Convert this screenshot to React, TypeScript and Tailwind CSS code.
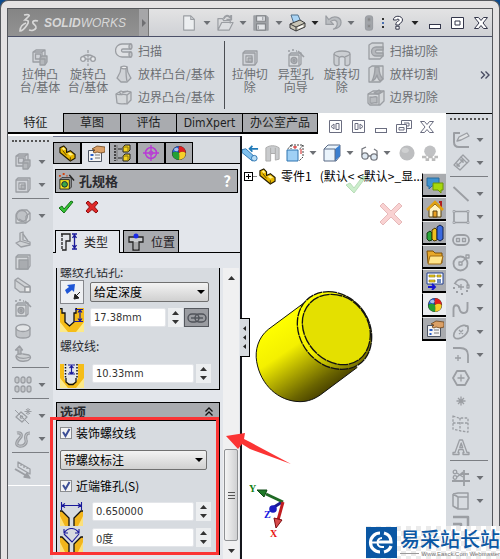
import React, { useState } from 'react';
import clsx from 'clsx';

type IconProps = { children: React.ReactNode; className?: string; box?: string };

// Disabled toolbar glyphs share one grey outline style
function Gray({ children, className = 'size-[18px]', box = '0 0 18 18' }: IconProps) {
  return (
    <svg viewBox={box} className={clsx('shrink-0', className)} fill="none" stroke="#9b9ea3" strokeWidth="1.3" strokeLinejoin="round">
      {children}
    </svg>
  );
}

function Svg({ children, className = 'size-[18px]', box = '0 0 18 18' }: IconProps) {
  return (
    <svg viewBox={box} className={clsx('shrink-0', className)} fill="none">
      {children}
    </svg>
  );
}

function Caret({ dark = false }: { dark?: boolean }) {
  return (
    <svg viewBox="0 0 8 4" className="h-1 w-2 shrink-0" fill={dark ? '#222' : '#6d7075'}>
      <path d="M0.5 0h7L4 4z" />
    </svg>
  );
}

const icons = {
  boss: (
    <Gray>
      <path d="M2 3l3-2h9v9l-3 3H2zM2 3h9v10M11 3l3-2" fill="#d0d3d8" />
      <path d="M4.500 5h5v5h-5z" />
      <path d="M9 9l2-2h5v6l-2 3H9z" fill="#b4b7bb" />
      <path d="M9 10h5v6" />
    </Gray>
  ),
  cut: (
    <Gray>
      <path d="M2 4l2-2h12v11l-2 3H2z" fill="#d0d3d8" />
      <path d="M2 4h12v12" />
      <path d="M5 7h6v6H5z" fill="#eceef0" />
      <path d="M7 9h4v4H7z" fill="#b4b7bb" />
    </Gray>
  ),
  revolve: (
    <Gray>
      <path d="M9 1v16" strokeDasharray="3 1.500" />
      <path d="M1.500 11c0-3 4-5 7.500-5s7.500 2 7.500 5" />
      <circle cx="4" cy="10" r="2.300" fill="#e8eaec" />
      <circle cx="14" cy="10" r="2.300" fill="#e8eaec" />
      <path d="M6 10h6" />
    </Gray>
  ),
  sweep: (
    <Gray>
      <path d="M16 2H7a6 6 0 0 0 0 13h9v-5H8a1.500 1.500 0 0 1 0-3h8z" fill="#dfe1e4" />
      <ellipse cx="15.500" cy="4.500" rx="1.500" ry="2.500" fill="#c2c5c9" />
      <ellipse cx="15.500" cy="12.500" rx="1.500" ry="2.500" fill="#c2c5c9" />
    </Gray>
  ),
  loft: (
    <Gray>
      <path d="M6 2h6c0 6 2 8 4 11l-4 4H6l-4-4c2-3 4-5 4-11z" fill="#cfd2d6" />
      <ellipse cx="9" cy="2.500" rx="3" ry="1.300" fill="#eee" />
      <path d="M11 4c0 5 0 8 1 12" />
    </Gray>
  ),
  boundary: (
    <Gray>
      <path d="M1 6l5-3c3 2 6-1 10 1v8l-4 4c-3-1-6 1-10-1z" fill="#d4d7da" />
      <path d="M1 6c4 2 7-1 11 1v9M12 7l4-3M4 4l3 3M7 5l6-2" />
    </Gray>
  ),
  hole: (
    <Gray>
      <path d="M2 6h10v11H2z" fill="#d6d9dc" />
      <path d="M2 6l2-2h10v11l-2 2" />
      <circle cx="7" cy="11.500" r="3" fill="#b4b7bb" />
      <circle cx="7" cy="11.500" r="1" />
      <path d="M1 2h2M5 1h2M9 2h1M11 2l6 6" strokeWidth="1.600" />
    </Gray>
  ),
  revCut: (
    <Gray>
      <path d="M1 5c0-4 16-4 16 0v9c0 3-4 3-5 2V9c-1-2-5-2-6 0v7c-2 1-5 1-5-2z" fill="#cbced2" />
      <path d="M1 5c1 2 4 2 5 3M17 5c-1 2-4 2-5 3" />
    </Gray>
  ),
  sweepCut: (
    <Gray>
      <path d="M2 3l3-2h11v13l-3 3H2z" fill="#d3d6d9" />
      <path d="M16 5H9a4 4 0 0 0 0 9h7v-3h-6a1 1 0 0 1 0-3h6z" fill="#b5b8bc" />
    </Gray>
  ),
  loftCut: (
    <Gray>
      <path d="M2 3l3-2h11v13l-3 3H2z" fill="#d3d6d9" />
      <path d="M8 2h4c0 5 1 9 4 12l-3 2c-3-3-2-4-3-6-1 3-2 5-5 6 2-4 3-9 3-14z" fill="#b0b3b7" />
    </Gray>
  ),
  boundaryCut: (
    <Gray>
      <path d="M1 6l5-3h11v10l-4 4H3l-2-2z" fill="#d4d7da" />
      <path d="M1 6h11l5-3M12 6v11" />
      <path d="M3 9c3 1 5-1 7 0v6c-2-1-4 1-7 0z" fill="#b9bcc0" />
      <path d="M7 5l5-3 2 2-3 2z" fill="#a9acb0" />
    </Gray>
  ),
  fillet: (
    <Gray>
      <path d="M2 16V9c0-3 2-6 6-6h5l3 3v7l-4 3z" fill="#d5d8db" />
      <circle cx="8" cy="9" r="5.500" fill="#bfc2c6" />
      <path d="M5 12l7 4M12 9v7M12 9l4-3" />
    </Gray>
  ),
  rib: (
    <Gray>
      <path d="M2 13l4-2V3l3-1v8l7 2v3l-9 2z" fill="#cfd2d5" />
      <path d="M9 4l5 7M6 11l10 3" />
    </Gray>
  ),
  shell: (
    <Gray>
      <path d="M2 4l2-2h12v11l-2 3H2z" fill="#d5d8db" />
      <path d="M2 4h12v12" />
      <path d="M5 7h9v9H5z" fill="#a9acb0" />
    </Gray>
  ),
  draft: (
    <Gray>
      <path d="M1 4l3-2 12 8v6H6L1 12z" fill="#d0d3d6" />
      <path d="M1 4l10 7v5M11 11h5" />
      <path d="M11 11h5v5h-5z" fill="#eee" />
    </Gray>
  ),
  cylinder: (
    <Gray>
      <path d="M2 6v7c0 4 14 4 14 0V6z" fill="#c0c3c7" />
      <ellipse cx="9" cy="6" rx="7" ry="3.500" fill="#e3e5e7" />
    </Gray>
  ),
  wrap: (
    <Gray>
      <path d="M2 11c1-2 4-3 7-2l6 1c3 2 1 6-4 6-5 1-9-1-9-5z" fill="#cccfd2" />
      <path d="M2 11c4 3 9 3 14 1" />
      <path d="M4 9V5H1.500L5.500 1l3 4H7v4z" fill="#b4b7bb" />
    </Gray>
  ),
  pattern: (
    <Gray>
      {[2, 8, 14].map((x) => (
        <g key={x} fill="#c4c7ca">
          <rect x={x - 1} y="1" width="4" height="6" rx="2" />
          <rect x={x - 1} y="10" width="4" height="6" rx="2" />
        </g>
      ))}
    </Gray>
  ),
  refGeo: (
    <Gray>
      <path d="M2 10l5-5 6 5-5 5z" />
      <circle cx="7.500" cy="10" r="1.200" />
      <path d="M1 3l14 14M14 1v7M10.500 4.500h7M12 2l4 5M16 2l-4 5" strokeWidth="1" />
    </Gray>
  ),
  curve: (
    <Gray>
      <path d="M3 3c5-1 5 3 3 5-3 3-5 7-1 8 5 1 8-3 7-6-1-4 0-7 4-7" strokeWidth="3.200" />
      <path d="M3 3c5-1 5 3 3 5-3 3-5 7-1 8 5 1 8-3 7-6-1-4 0-7 4-7" stroke="#c6c9cd" strokeWidth="1" />
    </Gray>
  ),
  instant: (
    <Gray>
      <path d="M4 1l12 7v5L4 6zM7 3v2M10 5v2M13 6v2" />
      <path d="M1 8l12 7" strokeWidth="2" />
      <path d="M16 17l-6-1 3-4z" fill="#9b9ea3" />
    </Gray>
  ),
  sketch: (
    <Gray>
      <path d="M8 2H2v9c0 3 2 5 5 5h10" strokeWidth="2" />
      <path d="M5 10l2-4 8-4 2 3-8 4z" fill="#e0e2e4" />
    </Gray>
  ),
  dimension: (
    <Gray>
      <path d="M2 11l7-8 6 6-7 7z" />
      <path d="M5 12l6-6M5 12v-3M5 12h3M11 6H8M11 6v3M9 3l2-2 6 6-2 2" />
    </Gray>
  ),
  line: <Gray><path d="M1.500 2l15 14" strokeWidth="1.800" /></Gray>,
  rect: (
    <Gray>
      <path d="M2 3.500h14v11H2z" strokeWidth="1.700" />
      <path d="M1 2.500h2v2H1zM15 2.500h2v2h-2zM1 13.500h2v2H1zM15 13.500h2v2h-2z" fill="#d7dadf" strokeWidth=".8" />
    </Gray>
  ),
  slot: (
    <Gray>
      <rect x="1" y="4" width="16" height="10" rx="5" strokeWidth="1.800" />
      <path d="M4.500 7.500h3v3h-3zM10.500 7.500h3v3h-3z" />
    </Gray>
  ),
  circle: (
    <Gray>
      <circle cx="8.500" cy="9.500" r="7" strokeWidth="1.800" />
      <path d="M7 8h3v3H7zM10 8l6-6" />
      <path d="M14 1h3v3h-3z" fill="#d7dadf" />
    </Gray>
  ),
  arc: (
    <Gray>
      <path d="M3 7c2-7 13-6 13 2" strokeWidth="1.700" />
      <path d="M2 6l7 4M9 7v6M6 10h6M15 8h2v3h-2z" />
      <path d="M1 11h2M4 15h2M9 17h2M14 14h2" strokeWidth="2" />
    </Gray>
  ),
  spline: <Gray><path d="M1.500 17V9c0-5 5-5 6 0s8 6 8-1V2" strokeWidth="1.900" /></Gray>,
  ellipse: (
    <Gray>
      <ellipse cx="9" cy="9" rx="8.500" ry="5" transform="rotate(-40 9 9)" strokeWidth="1.700" />
      <path d="M7 7l4 4M11 7l-4 4M13 3h3v3" />
    </Gray>
  ),
  corner: (
    <Gray>
      <path d="M1 2h7c6 0 8 3 8 7v8" strokeWidth="1.800" />
      <path d="M6 9v6M3 12h6" />
    </Gray>
  ),
  polygon: (
    <Gray>
      <path d="M5 2h8l4 7-4 7H5L1 9z" strokeWidth="1.800" />
      <path d="M9 5.500v7M5.500 9h7" />
    </Gray>
  ),
  point: <Gray><path d="M9 4.500v9M4.500 9h9M6 6l6 6M12 6l-6 6" /></Gray>,
  plane: (
    <Gray>
      <path d="M1 1l6 2h9v14l-7-1-8-2zM1 8h15M8 3v12" strokeDasharray="2.500 1.500" />
    </Gray>
  ),
  text: (
    <Gray>
      <path d="M1 16.500v-2h2L7.500 2h3L15 14.500h2v2h-6v-2h1l-1-3H7l-1 3h1v2zM7.700 9.500h3L9.200 5z" />
    </Gray>
  ),
  trim: (
    <Gray>
      <path d="M0 12h18M12 1v16M9 5h8" strokeWidth="1.800" />
      <circle cx="3" cy="3" r="1.800" />
      <circle cx="3" cy="8.500" r="1.800" />
      <path d="M5 4l6 4M5 8l6-5" />
    </Gray>
  ),
  convert: (
    <Gray>
      <path d="M1 2l5-1h10v4M1 2v12l5 3M1 2l5 3v12M6 5h10v12H6z" strokeWidth="1.500" />
    </Gray>
  ),
  offset: (
    <Gray>
      <path d="M1 2h15v14" strokeWidth="2.500" />
      <path d="M1 9h8v7" strokeWidth="2.500" />
    </Gray>
  ),
};

const part = (
  <Svg className="size-[17px]">
    <path d="M1 3l4-2 3 3v4l4-2 5 4v4l-5 3L1 8z" fill="#e8b800" stroke="#221a00" strokeWidth="1.200" strokeLinejoin="round" />
    <path d="M3 3.500l2-1 2 2-2 1zM9 9l3-1 3 2-3 1.500z" fill="#fff08a" />
    <path d="M12 13v4M4 6l4 5" stroke="#5a4300" />
  </Svg>
);

const sphere = (
  <Svg className="size-4">
    <circle cx="9" cy="9" r="8" fill="#222" />
    <path d="M9 1.500A7.500 7.500 0 0 0 1.500 9c2-2 5-2 7 0 0-3 0-5 .5-7.500z" fill="#2a62d8" />
    <path d="M9 1.500C14 1.500 16.500 5 16.500 9c-2-2-5-2-7.500 0-.5-3-.5-5 0-7.500z" fill="#e02020" />
    <path d="M1.500 9c2-2 5-2 7.500 0 .5 3 .5 5 0 7.500C4 16.500 1.500 13 1.500 9z" fill="#25a035" />
    <path d="M16.500 9c-2-2-5-2-7.500 0 .5 3 .5 5 0 7.500 5 0 7.500-3.500 7.500-7.500z" fill="#f6cf2a" />
    <ellipse cx="6" cy="5" rx="2.500" ry="2" fill="#fff" opacity=".6" />
  </Svg>
);

const property = (
  <Svg className="size-[18px]">
    <path d="M1.500 5.500h13v11h-13z" fill="#f4f4f4" stroke="#4d5563" />
    <path d="M3.500 9h3v2h-3zM3.500 13h2v2h-2z" fill="#2b5fc4" />
    <path d="M8 10h5M8 13h5" stroke="#777" />
    <path d="M5 4l5-3 8 1v5l-4 1-4-1-2 1-2-1 2-2z" fill="#dba066" stroke="#6b431b" strokeWidth=".8" />
  </Svg>
);

const quickTools = [
  {
    name: '新建',
    icon: <Gray className="size-4"><path d="M3 1h8l4 4v12H3z" fill="#eceef0" /><path d="M11 1v4h4" /></Gray>,
  },
  {
    name: '打开',
    icon: <Gray className="size-[17px]"><path d="M1 5h5l1 2h7v3M1 5v12l4-8h12l-4 8H1z" fill="#dcdee1" /><path d="M7 5c2-4 5-4 7-1M15 1v5h-5" strokeWidth="2" /></Gray>,
  },
  {
    name: '保存',
    icon: <Gray className="size-4"><path d="M1 1h14l2 2v14H1z" fill="#9fa2a6" /><path d="M4 1h10v6H4zM4 10h10v7H4z" fill="#e3e5e8" stroke="#84878b" /><path d="M11 2v4M6 12v4" /></Gray>,
  },
  {
    name: '打印',
    dark: true,
    icon: (
      <Svg className="size-[18px]">
        <path d="M3 1h7l3 7-7 2z" fill="#a9d4f5" stroke="#53728d" />
        <path d="M2 10l10-4 5 3v4l-9 4-6-3z" fill="#c9c5b5" stroke="#3c3c3c" />
        <path d="M2 10l6 3 9-4M8 13v4" stroke="#3c3c3c" />
        <path d="M10 14l5-2" stroke="#fff" strokeWidth="1.500" />
      </Svg>
    ),
  },
  {
    name: '撤消',
    icon: <Gray className="size-[17px]"><path d="M1 2v9h8L6 8c4-3 7-1 7 2s-2 5-4 6c6-1 8-4 8-7 0-6-8-8-13-3z" fill="#bbbec2" /></Gray>,
  },
];

const featureTabs = ['特征', '草图', '评估', 'DimXpert', '办公室产品'];
const tabWidths = ['w-14', 'w-[57px]', 'w-14', 'w-[66px]', 'w-[75px]'];

type Tool = { name: string; icon: React.ReactNode; menu?: boolean } | null;

const leftTools: Tool[] = [
  { name: '拉伸凸台', icon: icons.boss, menu: true },
  { name: '拉伸切除', icon: icons.cut, menu: true },
  null,
  { name: '圆角', icon: icons.fillet, menu: true },
  { name: '筋', icon: icons.rib },
  { name: '抽壳', icon: icons.shell },
  { name: '拔模', icon: icons.draft },
  { name: '异型孔向导', icon: icons.hole },
  { name: '圆顶', icon: icons.cylinder },
  { name: '包覆', icon: icons.wrap },
  null,
  { name: '线性阵列', icon: icons.pattern, menu: true },
  null,
  { name: '参考几何体', icon: icons.refGeo, menu: true },
  { name: '曲线', icon: icons.curve, menu: true },
  null,
  { name: 'Instant3D', icon: icons.instant },
];

const rightTools: Tool[] = [
  { name: '草图绘制', icon: icons.sketch, menu: true },
  { name: '智能尺寸', icon: icons.dimension, menu: true },
  null,
  { name: '直线', icon: icons.line, menu: true },
  { name: '边角矩形', icon: icons.rect, menu: true },
  { name: '直槽口', icon: icons.slot, menu: true },
  { name: '圆', icon: icons.circle, menu: true },
  { name: '圆弧', icon: icons.arc, menu: true },
  { name: '样条曲线', icon: icons.spline, menu: true },
  { name: '椭圆', icon: icons.ellipse, menu: true },
  { name: '绘制圆角', icon: icons.corner, menu: true },
  { name: '多边形', icon: icons.polygon },
  { name: '点', icon: icons.point },
  { name: '基准面', icon: icons.plane },
  { name: '文字', icon: icons.text },
  null,
  { name: '剪裁实体', icon: icons.trim, menu: true },
  { name: '转换实体引用', icon: icons.convert, menu: true },
  { name: '等距实体', icon: icons.offset },
];

function ToolColumn({ tools }: { tools: Tool[] }) {
  return (
    <div className="flex flex-col">
      <div className="mx-1 mb-2 mt-1 border-t-2 border-dotted border-[#555]" />
      {tools.map((tool, i) =>
        tool ? (
          <button key={i} aria-label={tool.name} className="flex h-[23px] items-center gap-1.5 pl-1.5">
            {tool.icon}
            {tool.menu && <Caret />}
          </button>
        ) : (
          <div key={i} className="mx-1 mb-[5px] mt-0.5 h-px bg-[#7b7e83]" />
        )
      )}
    </div>
  );
}

function BigButton({ icon, lines }: { icon: React.ReactNode; lines: string[] }) {
  return (
    <button className="flex w-[46px] flex-col items-center pt-3 text-[12px] leading-[13px]">
      {icon}
      {lines.map((line) => (
        <span key={line} className="whitespace-nowrap">{line}</span>
      ))}
    </button>
  );
}

function SmallButton({ icon, label }: { icon: React.ReactNode; label: string }) {
  return (
    <button className="flex h-[23px] items-center gap-[5px] whitespace-nowrap text-[12px]">
      {icon}
      {label}
    </button>
  );
}

function Ribbon() {
  return (
    <div className="flex h-[76px] shrink-0 bg-[#d7dbe0] pl-[9px] text-[#6b6e72]">
      <div className="flex gap-0.5">
        <BigButton icon={icons.boss} lines={['拉伸凸', '台/基体']} />
        <BigButton icon={icons.revolve} lines={['旋转凸', '台/基体']} />
      </div>
      <div className="ml-1 flex flex-col pt-0.5">
        <SmallButton icon={icons.sweep} label="扫描" />
        <SmallButton icon={icons.loft} label="放样凸台/基体" />
        <SmallButton icon={icons.boundary} label="边界凸台/基体" />
      </div>
      <div className="my-1 ml-[9px] mr-0.5 w-px bg-[#4a4d52]" />
      <BigButton icon={icons.cut} lines={['拉伸切', '除']} />
      <BigButton icon={icons.hole} lines={['异型孔', '向导']} />
      <BigButton icon={icons.revCut} lines={['旋转切', '除']} />
      <div className="ml-0.5 flex flex-col pt-0.5">
        <SmallButton icon={icons.sweepCut} label="扫描切除" />
        <SmallButton icon={icons.loftCut} label="放样切割" />
        <SmallButton icon={icons.boundaryCut} label="边界切除" />
      </div>
      <button aria-label="更多" className="ml-auto mr-0.5">
        <svg viewBox="0 0 10 8" className="h-2 w-2.5" fill="none" stroke="#4a4d63" strokeWidth="1.400">
          <path d="M1 0.500l3.500 3.500L1 7.500M5.500 0.500L9 4 5.500 7.500" />
        </svg>
      </button>
    </div>
  );
}

function TitleBar() {
  return (
    <header className="flex h-7 shrink-0 items-center border-b border-[#4b5068] bg-linear-to-b from-[#e3e3e4] to-[#cfd1d5]">
      <div className="flex h-full w-[131px] items-center gap-1 bg-linear-to-b from-[#858585] to-[#929292] pl-2.5 text-[#d8d8d8]">
        <svg viewBox="0 0 22 20" className="h-5 w-[22px]" fill="none" stroke="#d8d8d8" strokeWidth="1.700">
          <path d="M6 2c4-1 6 0 5 1L7 7c4 0 4 2 2 5s-5 6-7 6c0-4 3-7 6-8M20 8c-3-1-6 0-5 2s4 3 3 5-4 3-7 2" />
        </svg>
        <span className="font-['Liberation_Sans',sans-serif] text-[12px] italic">
          <b>SOLID</b>WORKS
        </span>
      </div>
      <button aria-label="展开菜单" className="flex h-full w-2.5 items-center justify-center border-r border-[#777] bg-[#a6a6a8]">
        <svg viewBox="0 0 4 8" className="h-2 w-1" fill="#6f6f72"><path d="M0 0l4 4-4 4z" /></svg>
      </button>
      <div className="ml-auto flex h-full items-center">
        {quickTools.map((t) => (
          <React.Fragment key={t.name}>
            <button aria-label={t.name} className="flex w-5 justify-center">{t.icon}</button>
            <button aria-label={t.name + '选项'} className="flex w-4 justify-center"><Caret dark={t.dark} /></button>
          </React.Fragment>
        ))}
        <button aria-label="重建模型" className="flex w-5 justify-center">
          <Gray className="size-4"><rect x="5" y="1" width="8" height="16" rx="3" fill="#a2a5a9" /><circle cx="9" cy="5" r="2" fill="#888" /><circle cx="9" cy="12.500" r="2" fill="#888" /></Gray>
        </button>
        <span className="flex w-2 flex-col items-center gap-0.5">
          <i className="size-0.5 bg-[#333]" />
          <i className="size-0.5 bg-[#4a70b0]" />
          <i className="size-0.5 bg-[#333]" />
        </span>
        <button aria-label="帮助" className="flex w-5 justify-center">
          <Svg className="size-[15px]">
            <path d="M4 6c0-6 11-6 11 0 0 4-4 3-4 6H7c0-5 4-4 4-6 0-1.500-3-1.500-3 0zM7 13.500h4v3.500H7z" fill="#fff" stroke="#33364a" strokeWidth="1.200" />
          </Svg>
        </button>
        <button aria-label="帮助选项" className="flex w-4 justify-center"><Caret dark /></button>
        <button aria-label="最小化" className="flex h-3 w-[23px] items-end justify-center">
          <span className="h-[5px] w-3 border border-[#33364a] bg-white" />
        </button>
        <button aria-label="最大化" className="flex w-[23px] justify-center">
          <Svg className="h-3 w-[13px]" box="0 0 13 12"><path d="M.5.5h12v11H.5zM4 4h5v4H4z" fill="#fff" stroke="#33364a" /></Svg>
        </button>
        <button aria-label="关闭" className="flex w-[23px] justify-center"><CloseGlyph color="#33364a" /></button>
      </div>
    </header>
  );
}

function CloseGlyph({ color }: { color: string }) {
  return (
    <Svg className="h-3 w-[14px]" box="0 0 14 12">
      <path d="M.5.5h4L7 3.500 9.500.5h4L9 6l4.500 5.500h-4L7 8.500l-2.500 3h-4L5 6z" fill="#fff" stroke={color} />
    </Svg>
  );
}

function DocControls() {
  const c = '#6a6d80';
  return (
    <div className="ml-auto flex items-center gap-[5px] pr-2.5 pt-1">
      <button aria-label="左侧面板" className="flex w-[18px] justify-center">
        <Svg className="size-[13px]" box="0 0 13 13"><path d="M.5.5h12v12H.5z" stroke={c} /><path d="M5 4v5L2 6.500zM7 3.500h3v6H7z" stroke={c} /></Svg>
      </button>
      <button aria-label="右侧面板" className="flex w-[18px] justify-center">
        <Svg className="size-[13px]" box="0 0 13 13"><path d="M.5.5h12v12H.5z" stroke={c} /><path d="M8 4v5l3-2.500zM3 3.500h3v6H3z" stroke={c} /></Svg>
      </button>
      <button aria-label="最小化文档" className="flex h-3 w-[18px] items-end justify-center">
        <span className="h-[5px] w-3 border border-[#6a6d80]" />
      </button>
      <button aria-label="还原文档" className="flex w-[18px] justify-center">
        <Svg className="h-[13px] w-4" box="0 0 16 13"><path d="M5.500 4V.5h10v8H11M.5 4.500h10v8H.5zM3 7.500h5v2.500H3zM8 3h5v3h-2" stroke={c} /></Svg>
      </button>
      <button aria-label="关闭文档" className="flex w-[18px] justify-center"><CloseGlyph color={c} /></button>
    </div>
  );
}

const panelTabs = [
  part,
  property,
  <Svg className="size-[18px]">
    <path d="M1 1v16" stroke="#222" strokeWidth="1.500" strokeDasharray="2 1" />
    <path d="M3 1v16" stroke="#777" />
    <path d="M4 5h4M4 14h4" stroke="#222" />
    <path d="M9 3l2-2h5v5l-2 2H9zM9 12l2-2h5v5l-2 2H9z" fill="#f4d321" stroke="#222" />
    <path d="M9 3h5v5M9 12h5v5" stroke="#8a7408" />
  </Svg>,
  <Svg className="size-[18px]">
    <circle cx="9" cy="9" r="5.500" stroke="#b93ad6" strokeWidth="1.500" />
    <circle cx="9" cy="9" r="2" stroke="#b93ad6" />
    <path d="M9 1v16M1 9h16" stroke="#b93ad6" strokeWidth="1.300" />
  </Svg>,
  sphere,
];

const panelTabNames = ['特征树', '属性', '配置', '尺寸专家', '外观'];

function Spinner({ name }: { name: string }) {
  return (
    <div className="flex h-[19px] w-[15px] shrink-0 flex-col bg-[#eceef0]">
      <button aria-label={name + '增加'} className="flex flex-1 items-center justify-center">
        <svg viewBox="0 0 7 4" className="h-1 w-[7px]" fill="#333"><path d="M0 4h7L3.500 0z" /></svg>
      </button>
      <button aria-label={name + '减少'} className="flex flex-1 items-center justify-center">
        <svg viewBox="0 0 7 4" className="h-1 w-[7px]" fill="#333"><path d="M0 0h7L3.500 4z" /></svg>
      </button>
    </div>
  );
}

function NumberField({ name, value, className }: { name: string; value: string; className: string }) {
  return (
    <input
      aria-label={name}
      defaultValue={value}
      className={clsx(
        "h-[19px] min-w-0 rounded-xs border border-[#e3e5e9] bg-white px-[3px] font-['DejaVu_Sans_Condensed','Noto_Sans_CJK_SC',sans-serif] text-[11px] text-[#333]",
        className
      )}
    />
  );
}

function Dropdown({ name, value, className }: { name: string; value: string; className: string }) {
  return (
    <div className={clsx('relative h-5', className)}>
      <select
        aria-label={name}
        className="h-full w-full appearance-none rounded-xs border border-[#707070] bg-linear-to-b from-[#f3f3f3] to-[#d0d0d0] pl-[3px] text-[12px] leading-4 text-black"
      >
        <option>{value}</option>
      </select>
      <svg viewBox="0 0 8 4" className="pointer-events-none absolute right-1 top-2 h-1 w-2" fill="#000"><path d="M0 0h8L4 4z" /></svg>
    </div>
  );
}

function Check({ label }: { label: string }) {
  const [checked, setChecked] = useState(true);
  return (
    <label className="flex h-4 items-center gap-1 whitespace-nowrap text-[12px] text-black">
      <span className="relative size-3">
        <input
          type="checkbox"
          checked={checked}
          onChange={(e) => setChecked(e.target.checked)}
          className="block size-3 appearance-none border border-[#8b8d90] bg-[#f4f4f4]"
        />
        {checked && (
          <svg viewBox="0 0 12 12" className="pointer-events-none absolute inset-0 size-3" fill="none" stroke="#3d4f96" strokeWidth="2">
            <path d="M3 5l2.500 4L9.500 2" />
          </svg>
        )}
      </span>
      {label}
    </label>
  );
}

function HoleGlyph({ kind }: { kind: 'depth' | 'thread' | 'sink' | 'angle' }) {
  const dims = {
    depth: 'M15 1.500h8M14 13.500h9M20 2v11M18 4.500l2-2.500 2 2.500M18 10.500l2 2.500 2-2.500',
    thread: 'M8 1h7M8 10h7M11.500 2v8M9.500 4l2-2 2 2M9.500 8l2 2 2-2',
    sink: 'M1.500 0v8M21.500 0v8M2 3.500h19M5 1.500l-3 2 3 2M18 1.500l3 2-3 2',
    angle: 'M4 5c4-6 11-6 15 0M4 1v4h4M19 1v4h-4M4 6l8 8 7-8',
  };
  if (kind === 'sink' || kind === 'angle') {
    return (
      <svg viewBox="0 0 24 24" className="size-6 shrink-0" fill="none">
        <path d="M0 9h2l7 7v8H0zM23 9h-2l-7 7v8h9z" fill="#f2b51c" />
        <path d="M0 14l5 10H0zM23 14l-5 10h5z" fill="#fbe07a" />
        <path d="M0 9h2l7 7v8M23 9h-2l-7 7v8" stroke="#111" strokeWidth="1.300" />
        <path d={dims[kind]} stroke="#1a1a9a" strokeWidth="1.100" />
      </svg>
    );
  }
  return (
    <svg viewBox="0 0 24 24" className="size-6 shrink-0" fill="none">
      <path d="M0 0h24v24H0z" fill="#f5bd18" />
      <path d="M0 14l8 10H0zM24 14l-8 10h8z" fill="#fbe98a" />
      {kind === 'depth' ? (
        <>
          <path d="M1 0l1 5h3v9l4.500 4L14 14V5h2l1-5z" fill="#d7dbe0" />
          <path d="M0 .5h2V5h3v9l4.500 4L14 14V5h2V.5h1" stroke="#111" strokeWidth="1.300" />
        </>
      ) : (
        <>
          <path d="M4 0h14v14l-2 4-5 2-5-2-2-4z" fill="#e4e7ea" />
          <path d="M6 14v4l3 2.500h4l3-2.500v-4" stroke="#111" strokeWidth="1.300" />
          <path d="M5.500 0v15M17 0v15" stroke="#111" strokeWidth="1.500" strokeDasharray="1.500 1.500" />
        </>
      )}
      <path d={dims[kind]} stroke="#1a1a9a" strokeWidth="1.200" />
    </svg>
  );
}

function ScrollBar() {
  return (
    <div className="ml-[3px] flex w-4 shrink-0 flex-col items-center bg-[#f0f0f1] pb-1.5 pt-2">
      <svg viewBox="0 0 7 4" className="h-1 w-[7px]" fill="#333"><path d="M0 4h7L3.500 0z" /></svg>
      <div className="flex-1" />
      <div className="mb-2 flex h-[92px] w-3.5 flex-col items-center justify-center gap-px rounded-xs border border-[#8f9194] bg-linear-to-r from-[#f5f5f5] to-[#cfd0d2]">
        <i className="h-px w-[7px] bg-[#555]" />
        <i className="mt-px h-px w-[7px] bg-[#555]" />
        <i className="mt-px h-px w-[7px] bg-[#555]" />
      </div>
      <svg viewBox="0 0 7 4" className="h-1 w-[7px]" fill="#333"><path d="M0 0h7L3.500 4z" /></svg>
    </div>
  );
}

function PropertyPanel() {
  const [tab, setTab] = useState(1);
  return (
    <section className="flex w-[189px] shrink-0 flex-col border-r-2 border-[#15161c] bg-[#e3e6eb]">
      <div className="flex h-7 items-end border-b border-black border-t border-t-[#6f7690] bg-[#d7dbe0]">
        {panelTabs.map((icon, i) => (
          <button
            key={i}
            aria-label={panelTabNames[i]}
            onClick={() => setTab(i)}
            className={clsx(
              'flex h-[21px] w-7 items-center justify-center border-l border-t border-black',
              tab === i ? '-mb-px h-[22px] bg-[#e3e6eb]' : 'border-r bg-[#a9abaf]'
            )}
          >
            {icon}
          </button>
        ))}
      </div>
      <div className="ml-0.5 mr-0.5 mt-[5px] flex h-6 items-center gap-1 border border-black bg-[#adafb3] pl-0.5 pr-1.5">
        <Svg className="size-[17px]">
          <path d="M2 7h10v10H2z" fill="#f6e21d" stroke="#222" />
          <path d="M2 7l2-2h10v10l-2 2" stroke="#222" />
          <circle cx="7" cy="12" r="3" fill="#39a845" stroke="#123" />
          <path d="M1 3h2M5 1h2M9 3h1" stroke="#d4400a" strokeWidth="2" />
          <path d="M12 2l5 6" stroke="#222" strokeWidth="1.500" />
        </Svg>
        <h2 className="text-[13px] font-bold text-[#2a2a2e]">孔规格</h2>
        <button aria-label="帮助" className="ml-auto text-[15px] font-bold text-white">?</button>
      </div>
      <div className="flex h-[37px] items-start gap-[11px] pl-[5px] pt-[7px]">
        <button aria-label="确定">
          <Svg className="h-[14px] w-4" box="0 0 16 14"><path d="M1 8l3-2 2 3 7-8 2 1-9 11z" fill="#35c435" stroke="#167016" /></Svg>
        </button>
        <button aria-label="取消">
          <Svg className="size-[14px]" box="0 0 14 14"><path d="M1 3l2-2 4 3.500L11 1l2 2-3.500 4L13 11l-2 2-4-3.500L3 13l-2-2 3.500-4z" fill="#e02828" stroke="#8e1010" /></Svg>
        </button>
      </div>
      <div className="flex h-[23px] items-end gap-[3px] border-b border-black pl-0.5 text-[12px] text-[#1f2024]">
        <button className="-mb-px flex h-[23px] w-[65px] items-center gap-1.5 border-x border-t border-black bg-[#e3e6eb] pl-1">
          <Svg className="size-[18px]">
            <path d="M2 1v16" stroke="#222" strokeWidth="1.300" strokeDasharray="3 1" />
            <path d="M1 1h9v7H6v9H2" stroke="#222" strokeWidth="1.300" />
            <path d="M12 1h5M12 16h5M14.500 2v13M12.500 5l2-3 2 3M12.500 12l2 3 2-3" stroke="#1a1a9a" strokeWidth="1.300" />
          </Svg>
          类型
        </button>
        <button className="flex h-[22px] w-14 items-center gap-1.5 border-x border-t border-black bg-[#a9abaf] pl-[3px]">
          <Svg className="size-[18px]">
            <path d="M2 4h14v5h-4v8H6V9H2z" fill="#c9cbce" stroke="#222" strokeWidth="1.300" />
            <circle cx="9" cy="3" r="2.500" fill="#1a2ae8" />
            <path d="M8 9v8M10 9v8" stroke="#888" />
          </Svg>
          位置
        </button>
      </div>
      <div className="mt-[15px] flex min-h-0 flex-1 overflow-hidden">
        <div className="ml-[3px] w-[164px] shrink-0 text-[12px] text-[#2a2b30]">
          <div className="border border-t-0 border-black bg-[#d7dbe0] pb-px pl-[3px]">
            <p className="-mt-1 h-4 leading-4">螺纹孔钻孔:</p>
            <div className="flex h-6 items-center gap-1.5">
              <button aria-label="反向" className="flex size-6 items-center justify-center border border-[#85878c] bg-[#eef0f3]">
                <Svg className="size-[18px]">
                  <path d="M2 7l4-3-2-2 8-1-1 8-2-2-5 4z" fill="#1e56d6" />
                  <path d="M17 9l-5 5M11 16l1-5 4 4z" stroke="#222" fill="#222" />
                </Svg>
              </button>
              <Dropdown name="终止条件" value="给定深度" className="w-[119px]" />
            </div>
            <div className="mt-1 flex h-6 items-start">
              <HoleGlyph kind="depth" />
              <NumberField name="盲孔深度" value="17.38mm" className="ml-1.5 w-[76px]" />
              <span className="w-0.5" />
              <Spinner name="盲孔深度" />
              <button aria-label="链接" className="ml-px flex h-[19px] w-[25px] items-center justify-center border border-[#55585e] bg-[#9a9ca1]">
                <svg viewBox="0 0 20 10" className="h-2.5 w-5" fill="none" stroke="#50535a" strokeWidth="1.400">
                  <rect x="1" y="1" width="11" height="8" rx="4" />
                  <rect x="8" y="1" width="11" height="8" rx="4" />
                  <path d="M4 5h12" />
                </svg>
              </button>
            </div>
            <p className="mt-1.5 h-4 leading-4">螺纹线:</p>
            <div className="mt-2.5 flex h-6 items-start">
              <HoleGlyph kind="thread" />
              <NumberField name="螺纹线深度" value="10.33mm" className="ml-2 w-[102px]" />
              <span className="w-0.5" />
              <Spinner name="螺纹线深度" />
            </div>
          </div>

          <div className="mt-3 border border-black bg-[#d7dbe0] pb-0.5">
            <button className="flex h-[18px] w-full items-center justify-between border-b border-black bg-[#a9abaf] pl-[3px] pr-1.5 text-[13px] font-bold leading-4">
              选项
              <svg viewBox="0 0 8 9" className="h-[9px] w-2" fill="none" stroke="#111" strokeWidth="1.300"><path d="M.5 4.500L4 1l3.500 3.500M.5 8.500L4 5l3.500 3.500" /></svg>
            </button>
            <div className="flex flex-col pl-[3px]">
              <div className="mt-1"><Check label="装饰螺纹线" /></div>
              <Dropdown name="标注" value="带螺纹标注" className="mt-[9px] w-[147px]" />
              <div className="mt-2"><Check label="近端锥孔(S)" /></div>
              <div className="mt-2 flex h-[26px]">
                <HoleGlyph kind="sink" />
                <NumberField name="锥孔直径" value="0.650000" className="ml-2 w-[102px]" />
                <span className="w-0.5" />
                <Spinner name="锥孔直径" />
              </div>
              <div className="flex h-6">
                <HoleGlyph kind="angle" />
                <NumberField name="锥孔角度" value="0度" className="ml-2 w-[102px]" />
                <span className="w-0.5" />
                <Spinner name="锥孔角度" />
              </div>
            </div>
          </div>
        </div>
        <ScrollBar />
      </div>
    </section>
  );
}

const taskTabs = [
  {
    name: '论坛',
    icon: <Svg><path d="M1 2h12v8H6l-3 3v-3H1z" fill="#3f92cf" stroke="#286a9c" /><path d="M7 7h10v7h-2v3l-3-3H7z" fill="#a6d80c" stroke="#6d9404" /></Svg>,
  },
  {
    name: '资源',
    icon: <Svg><path d="M3 9v8h12V9L9 4z" fill="#fff3c0" stroke="#5a4210" /><path d="M13 2h2v5" stroke="#b02020" strokeWidth="2" /><path d="M1 10l8-8 8 8" stroke="#e0a010" strokeWidth="2.500" /><path d="M7 11h4v6H7z" fill="#e8a020" stroke="#5a4210" /></Svg>,
  },
  {
    name: '设计库',
    icon: <Svg><path d="M1 9l3-2 2 2v7l-3 1-2-2z" fill="#28a838" stroke="#123c12" /><path d="M6 6l3-2 2 2v10l-3 1-2-2z" fill="#f0c020" stroke="#4a3800" /><path d="M11 3l3-2 3 2v12l-3 2-3-2z" fill="#3a6ae0" stroke="#12224c" /></Svg>,
  },
  {
    name: '文件探索器',
    icon: <Svg><path d="M1 3h6l2 2h7v10H2z" fill="#e8a828" stroke="#7a4e08" /><path d="M4 8h13l-2 8H2z" fill="#ffe48a" stroke="#a06a10" /></Svg>,
  },
  {
    name: '视图调色板',
    icon: <Svg><path d="M1 1h16v11H1z" fill="#fff" stroke="#1e3d8f" /><path d="M3 3h6v2H3zM11 3h4v2h-4zM3 8h6v2H3z" fill="#f2d21c" stroke="#7a6a10" strokeWidth=".6" /><path d="M11 7h4v4h-4z" fill="#6a8ac0" /><path d="M2 15h6M6 12l3 3-3 3" stroke="#1414d0" strokeWidth="1.800" /></Svg>,
  },
  { name: '外观', icon: sphere },
  { name: '自定义属性', icon: property },
];

const k = '#777a80';

function ViewToolbar() {
  return (
    <div className="flex h-8 items-center pt-0.5 text-[#333]">
      <button aria-label="上一视图" className="flex w-4 justify-center">
        <Svg className="size-[17px]"><path d="M0 5l4-1 10 9-3 4L0 8z" fill="#7fc0ee" stroke="#2e75b0" /><circle cx="13" cy="14" r="3" fill="#b7dcf5" stroke="#2e75b0" /><path d="M8 4h9M11 1L8 4l3 3" stroke="#1f7ab8" strokeWidth="1.800" /></Svg>
      </button>
      <button aria-label="剖面视图" className="ml-1 flex w-5 justify-center">
        <Svg className="size-[17px]"><path d="M2 3c4-3 10-3 14 0v12l-4 1V9H7v8H2z" fill="#c9cbcd" stroke="#aaa" /><path d="M7 3v6M12 3v6" stroke="#aaa" /></Svg>
      </button>
      <button aria-label="视图定向" className="ml-1 flex w-[30px] items-center gap-[5px]">
        <Svg><path d="M5 1h12v12M5 1v4M17 1l-4 5M5 1L1 6M17 13l-4 4" stroke="#444" strokeDasharray="2 1" /><path d="M1 6h11v11H1z" fill="#9fd0f5" stroke="#2e75b0" /><path d="M7 3h4M15 5v5M9 2v3" stroke="#d02020" /></Svg>
        <Caret />
      </button>
      <button aria-label="显示样式" className="ml-[7px] flex w-[30px] items-center gap-[5px]">
        <Svg><path d="M1 5l4-4h12v11l-4 5H1z" fill="#eaf4fc" stroke="#5a6a85" /><path d="M12 5l5-4v11l-5 5z" fill="#3a7fd0" /><path d="M1 5h11v12" stroke="#5a6a85" /></Svg>
        <Caret />
      </button>
      <button aria-label="隐藏/显示项目" className="ml-[7px] flex w-[30px] items-center gap-[5px]">
        <Svg><circle cx="5" cy="12" r="3.200" fill="#dfe9f2" stroke={k} strokeWidth="1.300" /><circle cx="14" cy="13" r="3.200" fill="#dfe9f2" stroke={k} strokeWidth="1.300" /><path d="M8 12h3M2 11L2 5l4-2M17 12V7l-3-2" stroke={k} strokeWidth="1.300" /></Svg>
        <Caret />
      </button>
      <button aria-label="编辑外观" className="ml-[9px]"><Svg className="size-4"><circle cx="9" cy="9" r="8.500" fill="#bdbec0" /><ellipse cx="7" cy="6" rx="4" ry="3" fill="#cfd0d1" /></Svg></button>
      <button aria-label="应用布景" className="ml-[7px]"><Svg className="size-4"><circle cx="9" cy="7" r="6.500" fill="#c0c1c3" /><path d="M0 12h5v3H0zM7 12h5v3H7zM14 12h4v3h-4zM4 15h4v3H4zM11 15h4v3h-4z" fill="#bbb" /></Svg></button>
    </div>
  );
}

function GraphicsArea() {
  return (
    <main className="relative min-w-0 flex-1 overflow-hidden bg-white">
      <ViewToolbar />
      <div className="flex h-4 items-center whitespace-pre pl-0.5 text-[12px] text-black">
        <button aria-label="展开特征树" className="flex size-[9px] items-center justify-center border border-black">
          <Svg className="size-[5px]" box="0 0 5 5"><path d="M2.500 0v5M0 2.500h5" stroke="#000" /></Svg>
        </button>
        <span className="mr-0.5 w-1 border-t border-[#888]" />
        {part}
        <span className="ml-[5px]">零件1   (默认&lt; &lt;默认&gt;_显...</span>
      </div>

      <svg viewBox="0 0 22 19" className="absolute left-[103px] top-[39px] h-[19px] w-[22px] opacity-35" fill="#6ccf6c" stroke="#3a9c3a">
        <path d="M1 10l4-2 4 5 9-12 3 1L9 18z" />
      </svg>
      <svg viewBox="0 0 24 24" className="absolute left-[137px] top-[66px] size-6 opacity-35" fill="#f08080" stroke="#b83a3a">
        <path d="M1 4l3-3 8 8 8-8 3 3-8 8 8 8-3 3-8-8-8 8-3-3 8-8z" />
      </svg>

      {/* solid body */}
      <svg viewBox="0 75 375 360" className="absolute left-2 top-[149px] h-[120px] w-[125px]" fill="none" stroke="#111" strokeWidth="3">
        <defs>
          <linearGradient id="side" gradientUnits="userSpaceOnUse" x1="70" y1="190" x2="215" y2="405">
            <stop offset="0" stopColor="#ffff00" />
            <stop offset=".35" stopColor="#f4f000" />
            <stop offset=".6" stopColor="#b0aa00" />
            <stop offset=".85" stopColor="#6b6500" />
            <stop offset="1" stopColor="#4a4300" />
          </linearGradient>
          <linearGradient id="rim" gradientUnits="userSpaceOnUse" x1="160" y1="130" x2="330" y2="320">
            <stop offset="0" stopColor="#ffff00" />
            <stop offset=".5" stopColor="#f2ee00" />
            <stop offset="1" stopColor="#6f6900" />
          </linearGradient>
        </defs>
        <path d="M163 128L55 208C25 232 14 270 20 305C32 375 85 424 150 425C175 425 195 416 212 404L322 322z" fill="url(#side)" stroke="none" />
        <path d="M163 128L55 208C25 232 14 270 20 305C32 375 85 424 150 425C175 425 195 416 212 404L322 322" />
        <path d="M235 95C305 95 365 160 365 230C365 290 330 328 275 328C205 328 142 262 142 190C142 135 180 95 235 95z" fill="url(#rim)" strokeWidth="4" strokeDasharray="26 2" />
        <path d="M245 103C310 103 361 165 361 222C361 280 325 314 280 314C215 314 157 250 157 188C157 138 195 103 245 103z" fill="#e4e000" strokeWidth="4" strokeDasharray="32 2" />
      </svg>

      {/* orientation triad */}
      <svg viewBox="0 0 40 58" className="absolute left-[7px] top-[344px] h-[58px] w-10" fontFamily="Liberation Serif, serif" fontSize="10" fontWeight="bold">
        <path d="M33 22L22 29" stroke="#1a1a90" strokeWidth="3" />
        <circle cx="24" cy="29" r="3.800" fill="#1c1cc0" />
        <path d="M34 22L17 14" stroke="#1f6a24" strokeWidth="3" />
        <path d="M8 10l10 0-3 7z" fill="#1f7a28" stroke="#114a16" />
        <path d="M34 22L29 40" stroke="#c01c20" strokeWidth="3" />
        <path d="M25 38l8 2-6 8z" fill="#d84a4a" stroke="#7c0c10" />
        <text x="0" y="12" fill="#128012">Y</text>
        <text x="15" y="38" fill="#1414e0">Z</text>
        <text x="21" y="57" fill="#e81010">X</text>
      </svg>

      <div className="absolute right-0 top-[37px] flex flex-col">
        {taskTabs.map((t) => (
          <button
            key={t.name}
            aria-label={t.name}
            className={clsx(
              'flex h-6 w-6 items-center justify-center border-b-2 border-l border-t border-black border-t-[#eee]',
              t.name === '外观' ? 'bg-[#eceef1]' : 'bg-[#a9abaf]'
            )}
          >
            {t.icon}
          </button>
        ))}
      </div>
    </main>
  );
}

function Watermark() {
  return (
    <div className="absolute bottom-0 right-0 flex h-[33px] items-center gap-[3px] bg-[conic-gradient(#fff_25%,#ebebeb_0_50%,#fff_0_75%,#ebebeb_0)] bg-size-[10px_10px]">
      <svg viewBox="0 0 31 31" className="size-[31px]" fill="none">
        <path d="M0 0h31v31H0z" fill="#0a57a4" />
        <path d="M14 6a9.500 9.500 0 0 0 0 19M18 6c4 1 7 4 7 9H12M18 25c4-1 6-3 7-6" stroke="#fff" strokeWidth="3.200" />
        <path d="M16 11a4.500 4.500 0 1 0 0 9h2M6 15.500h6" stroke="#fff" strokeWidth="2" />
      </svg>
      <div className="flex flex-col">
        <span className="h-[22px] text-[20px] font-medium leading-[22px] text-[#0a57a4]">易采站长站</span>
        <span className="flex h-2 items-center gap-0.5 whitespace-nowrap font-['Liberation_Sans',sans-serif] text-[6px] leading-[8px] text-[#777]">
          <i className="h-px flex-1 bg-[#999]" />
          Www.Easck.Com Webmaster
        </span>
      </div>
    </div>
  );
}

export default function App() {
  const [active, setActive] = useState(0);

  return (
    <div className="relative h-screen overflow-hidden bg-[#0b4a8f] font-['Noto_Sans_CJK_SC',sans-serif]">
      <div className="flex h-full rounded-t-lg border-t border-x border-[#55575c] bg-[#e4e2e3] px-1.5 pt-[7px]">
        <div className="flex min-w-0 flex-1 flex-col border-x border-t border-[#55575c]">
          <TitleBar />
          <Ribbon />
          <div className="flex min-h-0 flex-1">
            <div className="flex min-w-0 flex-1 flex-col">
              <nav className="flex h-[23px] shrink-0 bg-white text-[12px] text-[#1d1e22]">
                {featureTabs.map((t, i) => (
                  <button
                    key={t}
                    onClick={() => setActive(i)}
                    className={clsx(
                      "flex h-[21px] shrink-0 items-center justify-center whitespace-nowrap border-b-2 border-r border-black font-['DejaVu_Sans_Condensed','Noto_Sans_CJK_SC',sans-serif] leading-4",
                      tabWidths[i],
                      active === i ? 'bg-[#d7dbe0]' : 'border-t bg-[#a9abaf]'
                    )}
                  >
                    {t}
                  </button>
                ))}
                <DocControls />
              </nav>
              <div className="flex min-h-0 flex-1">
                <aside className="w-[45px] shrink-0 overflow-hidden bg-[#d7dbe0]">
                  <ToolColumn tools={leftTools} />
                  <div className="mt-1 border-t border-white" />
                </aside>
                <div className="relative flex shrink-0">
                  <PropertyPanel />
                  <button aria-label="折叠面板" className="absolute -right-2 top-[182px] z-10 flex h-[39px] w-[10px] flex-col items-center justify-center gap-1 border border-l-0 border-black bg-[#d7dbe0]">
                    {[0, 1, 2].map((i) => (
                      <svg key={i} viewBox="0 0 3 5" className="h-[5px] w-[3px]" fill="#222"><path d="M3 0v5L0 2.500z" /></svg>
                    ))}
                  </button>
                </div>
                <GraphicsArea />
              </div>
            </div>
            <aside className="w-[46px] shrink-0 overflow-hidden border-t border-black bg-[#d7dbe0]">
              <ToolColumn tools={rightTools} />
            </aside>
          </div>
        </div>
      </div>

      {/* callout around the options group */}
      <div className="pointer-events-none absolute left-[50px] top-[417px] h-[138px] w-[169px] border-[3px] border-[#fb3434]" />
      <svg viewBox="0 0 66 34" className="pointer-events-none absolute left-[226px] top-[431px] h-[34px] w-[66px]" fill="#fb3434">
        <path d="M0 5L19 2l-1 6 6 3 41 22-41-15-8-5-4 5z" />
      </svg>
      <Watermark />
    </div>
  );
}
